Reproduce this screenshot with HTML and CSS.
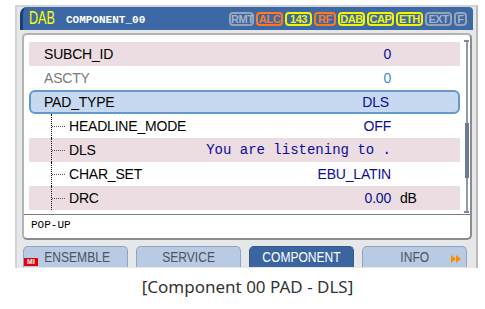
FILE: index.html
```html
<!DOCTYPE html>
<html lang="en">
<head>
  <meta charset="UTF-8">
  <title>DAB - Component 00</title>
  <link rel="stylesheet" href="styles.css">
</head>
<body>
  <!-- Device screen -->
  <div class="device">
    <!-- Title bar: band, page name, status badges -->
    <div class="header">
      <span class="band">DAB</span>
      <span class="title">COMPONENT_00</span>
      <div class="badges">
        <span class="badge gray w25">RMT</span>
        <span class="badge orange">ALC</span>
        <span class="badge yellow">143</span>
        <span class="badge orange w22">RF</span>
        <span class="badge yellow">DAB</span>
        <span class="badge yellow">CAP</span>
        <span class="badge yellow">ETH</span>
        <span class="badge gray">EXT</span>
        <span class="badge gray w12">F</span>
      </div>
    </div>

    <!-- Main list panel -->
    <div class="panel">
      <div class="body">
        <div class="list">
          <div class="row pink">
            <span class="label">SUBCH_ID</span>
            <span class="value">0</span>
          </div>
          <div class="row dim">
            <span class="label">ASCTY</span>
            <span class="value">0</span>
          </div>
          <div class="row selected">
            <span class="label">PAD_TYPE</span>
            <span class="value">DLS</span>
          </div>
          <div class="row child">
            <span class="label"><span class="branch"></span>HEADLINE_MODE</span>
            <span class="value">OFF</span>
          </div>
          <div class="row child pink">
            <span class="label"><span class="branch"></span>DLS</span>
            <span class="value mono">You are listening to .</span>
          </div>
          <div class="row child">
            <span class="label"><span class="branch"></span>CHAR_SET</span>
            <span class="value">EBU_LATIN</span>
          </div>
          <div class="row child pink">
            <span class="label"><span class="branch"></span>DRC</span>
            <span class="value">0.00</span>
            <span class="unit">dB</span>
          </div>
        </div>
        <!-- Scroll bar -->
        <div class="scroll">
          <div class="cap"></div>
          <div class="track top"></div>
          <div class="thumb"></div>
          <div class="track"></div>
          <div class="cap"></div>
        </div>
      </div>
      <div class="status">POP-UP</div>
    </div>

    <!-- Bottom tabs -->
    <div class="tabs">
      <div class="tab first"><span class="mi">MI</span><span class="text">ENSEMBLE</span></div>
      <div class="tab"><span class="text">SERVICE</span></div>
      <div class="tab active"><span class="text">COMPONENT</span></div>
      <div class="tab"><span class="text">INFO</span>
        <svg class="more" width="10" height="8" viewBox="0 0 10 8">
          <path d="M0 0 L5 4 L0 8 Z M5 0 L10 4 L5 8 Z" fill="#ff8a00"/>
        </svg>
      </div>
    </div>
  </div>

  <p class="caption">[Component 00 PAD - DLS]</p>
</body>
</html>
```

FILE: styles.css
```css
/* Page */
body {
  margin: 0;
  background: #fff;
  font-family: "Liberation Sans", Arial, sans-serif;
}

/* Grey bezel around the screen */
.device {
  box-sizing: border-box;
  width: 463px;
  height: 263px;
  margin: 5px 0 0 15px;
  padding: 0 3px;
  background: #e6e7e9;
  border: 2px solid #d2d3d5;
  border-right-color: #b9babc;
  border-bottom: 0;
}

/* Title bar */
.header {
  display: flex;
  align-items: center;
  height: 23px;
  padding-left: 6px;
  background: #3c69a6;
  border-left: 3px solid #1f3f70;
  border-radius: 7px 4px 0 0;
}

.band {
  display: inline-block;
  font-size: 18px;
  color: #ffff00;
  transform: scaleX(0.7);
  transform-origin: left center;
}

.title {
  margin-top: 2px;
  font-family: "Liberation Mono", monospace;
  font-weight: bold;
  font-size: 11px;
  color: #fff;
}

.badges {
  display: flex;
  gap: 2px;
  margin-left: auto;
  padding-right: 6px;
}

.badge {
  box-sizing: border-box;
  width: 27px;
  height: 14px;
  line-height: 10px;
  border: 2px solid;
  border-radius: 4px;
  font-weight: bold;
  font-size: 11px;
  letter-spacing: -0.4px;
  text-align: center;
}

.badge.w25 { width: 25px; }
.badge.w22 { width: 22px; }
.badge.w12 { width: 13px; }

.badge.yellow { color: #f4f400; border-color: #f4f400; }
.badge.orange { color: #ff7a1e; border-color: #ff7a1e; }
.badge.gray { color: #a9b3c2; border-color: #98a3b3; }

/* White list panel */
.panel {
  height: 207px;
  box-sizing: border-box;
  margin: 3px 1px 0 2px;
  background: #fff;
  border: 2px solid #b4b4b4;
  border-right-color: #8c8c8c;
  border-bottom-color: #8c8c8c;
  border-radius: 5px;
}

.body {
  display: flex;
  gap: 4px;
  padding: 5px 0 1px 5px;
}

.list {
  width: 431px;
  padding-top: 2px;
}

.row {
  display: grid;
  grid-template-columns: 1fr auto 69px;
  box-sizing: border-box;
  height: 24px;
  line-height: 24px;
  font-size: 14px;
  letter-spacing: -0.2px;
}

.row.pink {
  background: #ebdde2;
}

.row.selected {
  background: #c6d9f0;
  border: 2px solid #6399cb;
  border-radius: 6px;
  line-height: 20px;
}

.label {
  display: flex;
  align-items: center;
  padding-left: 15px;
  color: #000;
}

.row.selected .label {
  padding-left: 13px;
}

.value {
  color: #0c0c98;
  text-align: right;
}

.row.dim .label { color: #7a7a7a; }
.row.dim .value { color: #3f88d2; }

.value.mono {
  font-family: "Liberation Mono", monospace;
  letter-spacing: 0;
}

.unit {
  padding-left: 9px;
  color: #000;
}

/* Tree branch for sub items */
.row.child .label {
  padding-left: 22px;
}

.branch {
  align-self: stretch;
  width: 15px;
  margin-right: 2px;
  border-left: 1px dotted #111;
}

.branch::before {
  content: "";
  display: block;
  width: 13px;
  height: 12px;
  border-bottom: 1px dotted #555;
}

/* Scroll bar */
.scroll {
  display: flex;
  flex-direction: column;
  align-items: center;
  width: 5px;
  height: 173px;
}

.scroll .cap {
  width: 5px;
  height: 2px;
  background: #7d8ba0;
}

.scroll .track {
  flex: 1;
  width: 2px;
  background: #8d9ab0;
}

.scroll .track.top {
  flex: none;
  height: 81px;
}

.scroll .thumb {
  width: 4px;
  height: 55px;
  background: #6c7b94;
}

/* Status line at the bottom of the panel */
.status {
  border-top: 1px solid #7c7c7c;
  padding: 4px 0 0 7px;
  font-family: "Liberation Mono", monospace;
  font-size: 11px;
  color: #000;
}

/* Tabs */
.tabs {
  display: flex;
  gap: 8px;
  margin: 6px 0 0 3px;
}

.tab {
  position: relative;
  box-sizing: border-box;
  width: 105px;
  height: 21px;
  line-height: 21px;
  background: #b8cbe3;
  border: 1px solid #8ea5c2;
  border-bottom: 0;
  border-radius: 5px 5px 0 0;
  font-size: 14px;
  color: #4d5360;
  text-align: center;
}

.tab .text {
  display: inline-block;
  transform: scaleX(0.86);
}

.tab.first {
  padding-left: 3px;
}

.tab.active {
  background: #3a659f;
  border-color: #345b90;
  color: #fff;
}

.mi {
  position: absolute;
  left: 0;
  bottom: 1px;
  width: 14px;
  height: 8px;
  line-height: 8px;
  background: #e5000c;
  font-size: 7px;
  font-weight: bold;
  color: #fff;
}

.more {
  position: absolute;
  right: 5px;
  top: 8px;
}

/* Caption under the screen */
.caption {
  margin: 7px 0 0 0;
  padding-left: 10px;
  text-align: center;
  font-family: "Noto Sans", sans-serif;
  font-size: 17px;
  color: #333;
}
```
